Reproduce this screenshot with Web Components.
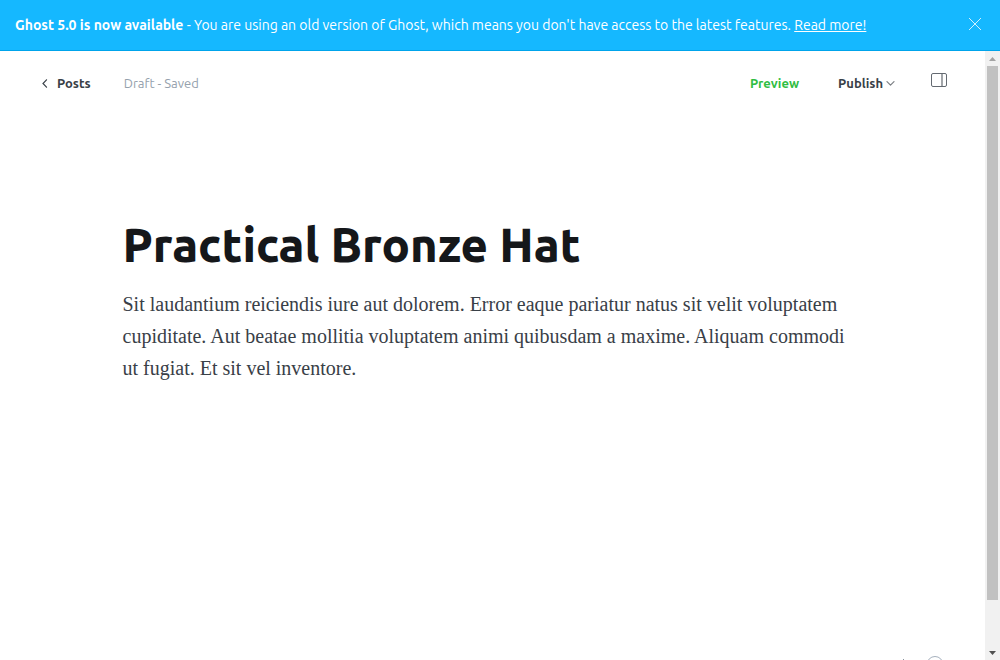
<!DOCTYPE html>
<html lang="en">
<head>
<meta charset="utf-8">
<title>Ghost editor</title>
<style>
  body { margin: 0; background: #fff; font-family: Ubuntu, "Noto Sans", "Open Sans", sans-serif; }
</style>
</head>
<body>
<gh-app>
  <gh-alert slot="alert"><strong>Ghost 5.0 is now available</strong> - You are using an old version of Ghost, which means you don't have access to the latest features. <a href="#changelog">Read more!</a></gh-alert>
  <gh-toolbar slot="toolbar" status="Draft - Saved"></gh-toolbar>
  <gh-post slot="post">
    <span slot="title">Practical Bronze Hat</span>
    <span slot="body">Sit laudantium reiciendis iure aut dolorem. Error eaque pariatur natus sit velit voluptatem cupiditate. Aut beatae mollitia voluptatem animi quibusdam a maxime. Aliquam commodi ut fugiat. Et sit vel inventore.</span>
  </gh-post>
  <gh-status slot="status"></gh-status>
</gh-app>
<script>
const define = (name, html, setup) => customElements.define(name, class extends HTMLElement {
  constructor() {
    super();
    const t = document.createElement('template');
    t.innerHTML = html;
    this.attachShadow({ mode: 'open' }).append(t.content.cloneNode(true));
  }
  connectedCallback() { if (setup) setup(this, this.shadowRoot); }
});

define('gh-app', `
<style>
  :host { display: flex; flex-direction: column; height: 100vh; overflow: hidden; }
  .view { flex: 1; display: flex; min-height: 0; }
  main { flex: 1; min-width: 0; display: flex; flex-direction: column; overflow: hidden; }
  .fill { flex: 1; min-height: 0; }
</style>
<slot name="alert"></slot>
<div class="view">
  <main><slot name="toolbar"></slot><div class="fill"><slot name="post"></slot></div><slot name="status"></slot></main>
  <gh-scrollbar></gh-scrollbar>
</div>`);

define('gh-alert', `
<style>
  :host { display: flex; align-items: center; justify-content: space-between; box-sizing: border-box; min-height: 51px; flex: none;
    padding: 0 19px 0 15px; background: #15b8ff; border-bottom: 1px solid #00a4eb; color: #fff; font-size: 14px; line-height: 20px; }
  ::slotted(strong) { font-weight: 700; }
  ::slotted(a) { color: #fff; text-decoration: underline; }
  button { display: flex; padding: 0 0 3px; border: 0; background: none; color: #fff; }
</style>
<div><slot></slot></div>
<button type="button" aria-label="Close"><svg width="12" height="12" viewBox="0 0 12 12" fill="none" stroke="currentColor" stroke-width=".8"><path d="M0 0l12 12M12 0L0 12"/></svg></button>`);

define('gh-toolbar', `
<style>
  :host { display: flex; align-items: center; justify-content: space-between; flex: none; height: 64px; padding: 0 38px 0 41px;
    box-sizing: border-box; font-size: 13px; line-height: 20px; color: #394047; }
  nav, .actions { display: flex; align-items: center; }
  nav { gap: 33px; }
  a { display: flex; align-items: center; gap: 8px; color: inherit; text-decoration: none; font-weight: 600; }
  .status { color: #95a1ad; }
  button { display: flex; align-items: center; gap: 3px; padding: 0; border: 0; background: none; color: inherit; font: inherit; font-weight: 600; }
  .actions { gap: 36px; }
  .preview { padding-right: 3px; color: #30bd42; }
  .settings { padding-bottom: 6px; }
</style>
<nav>
  <a href="#posts"><svg width="8" height="10" viewBox="0 0 8 10" fill="none" stroke="currentColor" stroke-width="1.2" stroke-linecap="round"><path d="M5.5 1.8L2 5.5l3.5 3.7"/></svg>Posts</a>
  <span class="status"></span>
</nav>
<div class="actions">
  <button type="button" class="preview">Preview</button>
  <button type="button">Publish<svg width="9" height="6" viewBox="0 0 9 6" fill="none" stroke="#7c8085" stroke-width="1.2" stroke-linecap="round" stroke-linejoin="round"><path d="M1 1.7L4.5 5.2L8 1.7"/></svg></button>
  <button type="button" class="settings" aria-label="Settings"><svg width="16" height="14" viewBox="0 0 16 14" fill="none" stroke="#646a71"><rect x=".5" y=".5" width="15" height="13" rx="1.5"/><path d="M11 .5v13" stroke-width="1.2"/></svg></button>
</div>`, (el, root) => { root.querySelector('.status').textContent = el.getAttribute('status'); });

define('gh-post', `
<style>
  :host { display: block; max-width: 740px; margin: 0 auto; padding-top: 102px; }
  h1 { margin: 0; color: #15171a; font-size: 47px; line-height: 56px; font-weight: 800; }
  p { margin: 15px 0 0; color: #394047; font: 20px/32px "Liberation Serif", Georgia, serif; }
</style>
<h1><slot name="title"></slot></h1>
<p><slot name="body"></slot></p>`);

define('gh-status', `
<style>
  :host { display: flex; justify-content: flex-end; align-items: flex-start; flex: none; height: 4px; padding-right: 42px; }
  svg { flex: none; }
</style>
<svg width="41" height="4" viewBox="0 0 41 4" fill="none"><path d="M1 3.5h1" stroke="#8a939d"/><circle cx="33" cy="8.5" r="8" stroke="#a5b0bd"/></svg>`);

define('gh-scrollbar', `
<style>
  :host { display: flex; flex-direction: column; flex: none; align-items: center; width: 15px; background: #f1f1f1; }
  .end { display: flex; align-items: center; justify-content: center; height: 15px; width: 15px; }
  .track { flex: 1; width: 11px; }
  .thumb { height: 534px; max-height: 100%; background: #c1c1c1; }
</style>
<div class="end"><svg width="7" height="4" viewBox="0 0 7 4"><path d="M0 4L3.5 0L7 4z" fill="#a3a3a3"/></svg></div>
<div class="track"><div class="thumb"></div></div>
<div class="end"><svg width="7" height="4" viewBox="0 0 7 4"><path d="M0 0h7L3.5 4z" fill="#505050"/></svg></div>`);
</script>
</body>
</html>
